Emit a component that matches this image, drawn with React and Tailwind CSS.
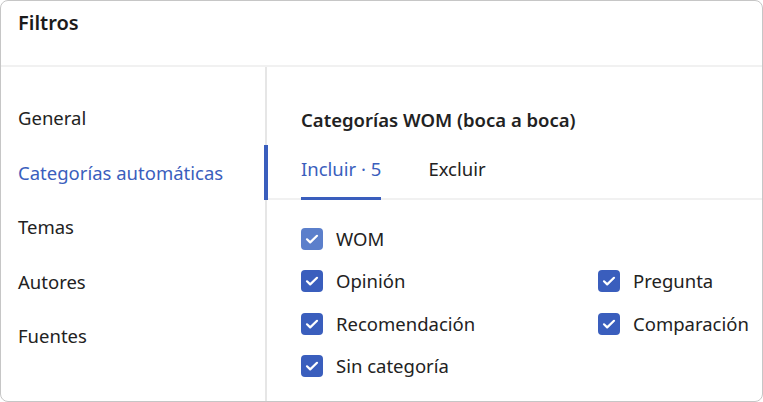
const navItems = ["General", "Categorías automáticas", "Temas", "Autores", "Fuentes"];

function Check({ faded }) {
  return (
    <span
      className={`flex h-[22px] w-[22px] shrink-0 items-center justify-center rounded-[4px] ${
        faded ? "bg-[#5b7fcb]" : "bg-[#3a5ebd]"
      }`}
    >
      <svg width="16" height="16" viewBox="0 0 16 16" fill="none">
        <path
          d="M3 8.3l3.2 3.1L13 4.8"
          stroke="white"
          strokeWidth="2.2"
          strokeLinecap="round"
          strokeLinejoin="round"
        />
      </svg>
    </span>
  );
}

function Option({ label, faded }) {
  return (
    <label className="flex h-[42.5px] items-center gap-[13px]">
      <Check faded={faded} />
      <span className="text-[18.5px] text-[#222]">{label}</span>
    </label>
  );
}

export default function App() {
  return (
    <div
      className="h-[402px] w-[763px] bg-white"
      style={{ fontFamily: '"Noto Sans", "Open Sans", sans-serif' }}
    >
      <div className="flex h-full w-full flex-col overflow-hidden rounded-[8px] border border-[#c6c6c6]">
        <div className="h-[66px] shrink-0 border-b-2 border-[#f1f1f1] px-[17px] pt-[7px]">
          <h1 className="text-[20px] font-semibold text-[#1b1b1b]">Filtros</h1>
        </div>

        <div className="flex flex-1">
          <nav className="flex w-[266px] shrink-0 flex-col border-r-2 border-[#e6e6e6] pt-[24px]">
            {navItems.map((item) => {
              const active = item === "Categorías automáticas";
              return (
                <div
                  key={item}
                  className={`relative flex h-[54.5px] items-center px-[17px] text-[18.5px] ${
                    active ? "text-[#3a5ebd]" : "text-[#222]"
                  }`}
                >
                  {item}
                  {active && (
                    <span className="absolute right-[-3px] top-[-1px] h-[55px] w-[4px] bg-[#3a5ebd]" />
                  )}
                </div>
              );
            })}
          </nav>

          <section className="flex-1 pt-[39px]">
            <h2 className="pl-[34px] text-[18.5px] font-semibold text-[#222]">
              Categorías WOM (boca a boca)
            </h2>
            <div className="mt-[21px] flex border-b-2 border-[#f1f1f1] pl-[34px]">
              <div className="-mb-[2px] border-b-[3px] border-[#3a5ebd] pb-[14px] text-[18.5px] text-[#3a5ebd]">
                Incluir · 5
              </div>
              <div className="ml-[47px] pb-[14px] text-[18.5px] text-[#222]">Excluir</div>
            </div>
            <div className="pl-[34px] pt-[18px]">
              <Option label="WOM" faded />
              <div className="grid grid-cols-[297px_1fr]">
                <Option label="Opinión" />
                <Option label="Pregunta" />
                <Option label="Recomendación" />
                <Option label="Comparación" />
                <Option label="Sin categoría" />
              </div>
            </div>
          </section>
        </div>
      </div>
    </div>
  );
}
